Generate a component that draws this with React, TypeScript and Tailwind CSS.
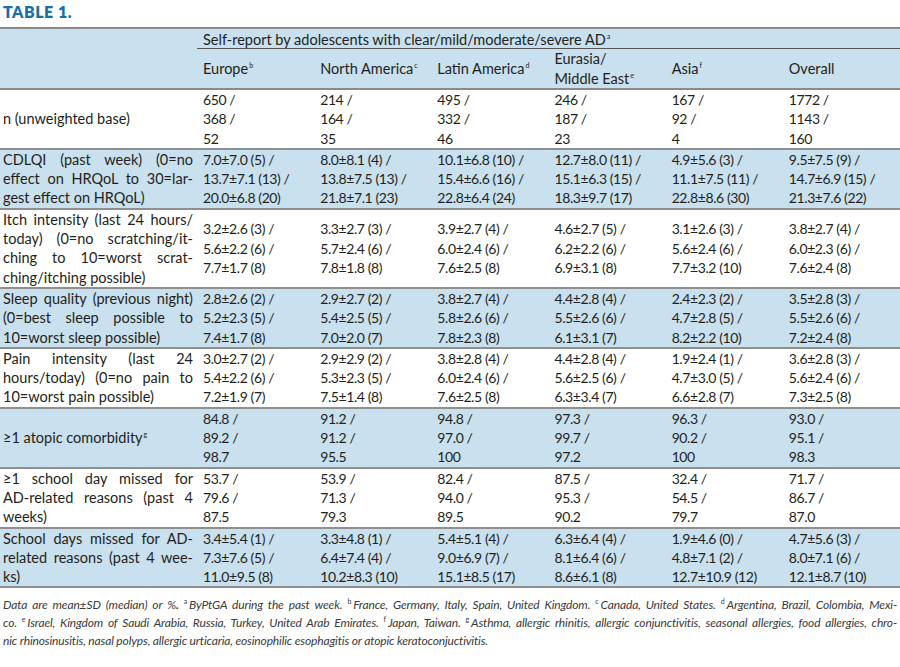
const cols = [
  { name: "Europe", sup: "b", w: "w-[105px]" },
  { name: "North America", sup: "c", w: "w-[122px]" },
  { name: "Latin America", sup: "d", w: "w-[107px]" },
  { name: "Eurasia/|Middle East", sup: "e", w: "w-[139px]" },
  { name: "Asia", sup: "f", w: "w-[111px]" },
  { name: "Overall", sup: "", w: "w-[119px]" },
];

type Row = { label: string[]; sup?: string; blue: boolean; vals: string[][] };

const rows: Row[] = [
  {
    label: ["n (unweighted base)"],
    blue: false,
    vals: [
      ["650 /", "368 /", "52"],
      ["214 /", "164 /", "35"],
      ["495 /", "332 /", "46"],
      ["246 /", "187 /", "23"],
      ["167 /", "92 /", "4"],
      ["1772 /", "1143 /", "160"],
    ],
  },
  {
    label: ["CDLQI (past week) (0=no", "effect on HRQoL to 30=lar-", "gest effect on HRQoL)"],
    blue: true,
    vals: [
      ["7.0±7.0 (5) /", "13.7±7.1 (13) /", "20.0±6.8 (20)"],
      ["8.0±8.1 (4) /", "13.8±7.5 (13) /", "21.8±7.1 (23)"],
      ["10.1±6.8 (10) /", "15.4±6.6 (16) /", "22.8±6.4 (24)"],
      ["12.7±8.0 (11) /", "15.1±6.3 (15) /", "18.3±9.7 (17)"],
      ["4.9±5.6 (3) /", "11.1±7.5 (11) /", "22.8±8.6 (30)"],
      ["9.5±7.5 (9) /", "14.7±6.9 (15) /", "21.3±7.6 (22)"],
    ],
  },
  {
    label: [
      "Itch intensity (last 24 hours/",
      "today) (0=no scratching/it-",
      "ching to 10=worst scrat-",
      "ching/itching possible)",
    ],
    blue: false,
    vals: [
      ["3.2±2.6 (3) /", "5.6±2.2 (6) /", "7.7±1.7 (8)"],
      ["3.3±2.7 (3) /", "5.7±2.4 (6) /", "7.8±1.8 (8)"],
      ["3.9±2.7 (4) /", "6.0±2.4 (6) /", "7.6±2.5 (8)"],
      ["4.6±2.7 (5) /", "6.2±2.2 (6) /", "6.9±3.1 (8)"],
      ["3.1±2.6 (3) /", "5.6±2.4 (6) /", "7.7±3.2 (10)"],
      ["3.8±2.7 (4) /", "6.0±2.3 (6) /", "7.6±2.4 (8)"],
    ],
  },
  {
    label: ["Sleep quality (previous night)", "(0=best sleep possible to", "10=worst sleep possible)"],
    blue: true,
    vals: [
      ["2.8±2.6 (2) /", "5.2±2.3 (5) /", "7.4±1.7 (8)"],
      ["2.9±2.7 (2) /", "5.4±2.5 (5) /", "7.0±2.0 (7)"],
      ["3.8±2.7 (4) /", "5.8±2.6 (6) /", "7.8±2.3 (8)"],
      ["4.4±2.8 (4) /", "5.5±2.6 (6) /", "6.1±3.1 (7)"],
      ["2.4±2.3 (2) /", "4.7±2.8 (5) /", "8.2±2.2 (10)"],
      ["3.5±2.8 (3) /", "5.5±2.6 (6) /", "7.2±2.4 (8)"],
    ],
  },
  {
    label: ["Pain intensity (last 24", "hours/today) (0=no pain to", "10=worst pain possible)"],
    blue: false,
    vals: [
      ["3.0±2.7 (2) /", "5.4±2.2 (6) /", "7.2±1.9 (7)"],
      ["2.9±2.9 (2) /", "5.3±2.3 (5) /", "7.5±1.4 (8)"],
      ["3.8±2.8 (4) /", "6.0±2.4 (6) /", "7.6±2.5 (8)"],
      ["4.4±2.8 (4) /", "5.6±2.5 (6) /", "6.3±3.4 (7)"],
      ["1.9±2.4 (1) /", "4.7±3.0 (5) /", "6.6±2.8 (7)"],
      ["3.6±2.8 (3) /", "5.6±2.4 (6) /", "7.3±2.5 (8)"],
    ],
  },
  {
    label: ["≥1 atopic comorbidity"],
    sup: "g",
    blue: true,
    vals: [
      ["84.8 /", "89.2 /", "98.7"],
      ["91.2 /", "91.2 /", "95.5"],
      ["94.8 /", "97.0 /", "100"],
      ["97.3 /", "99.7 /", "97.2"],
      ["96.3 /", "90.2 /", "100"],
      ["93.0 /", "95.1 /", "98.3"],
    ],
  },
  {
    label: ["≥1 school day missed for", "AD-related reasons (past 4", "weeks)"],
    blue: false,
    vals: [
      ["53.7 /", "79.6 /", "87.5"],
      ["53.9 /", "71.3 /", "79.3"],
      ["82.4 /", "94.0 /", "89.5"],
      ["87.5 /", "95.3 /", "90.2"],
      ["32.4 /", "54.5 /", "79.7"],
      ["71.7 /", "86.7 /", "87.0"],
    ],
  },
  {
    label: ["School days missed for AD-", "related reasons (past 4 wee-", "ks)"],
    blue: true,
    vals: [
      ["3.4±5.4 (1) /", "7.3±7.6 (5) /", "11.0±9.5 (8)"],
      ["3.3±4.8 (1) /", "6.4±7.4 (4) /", "10.2±8.3 (10)"],
      ["5.4±5.1 (4) /", "9.0±6.9 (7) /", "15.1±8.5 (17)"],
      ["6.3±6.4 (4) /", "8.1±6.4 (6) /", "8.6±6.1 (8)"],
      ["1.9±4.6 (0) /", "4.8±7.1 (2) /", "12.7±10.9 (12)"],
      ["4.7±5.6 (3) /", "8.0±7.1 (6) /", "12.1±8.7 (10)"],
    ],
  },
];

function Up({ c }: { c: string }) {
  return <sup className="text-[7px] top-[-6px] ml-[1px]">{c}</sup>;
}

// justified lines, last one left aligned
function Lines({ lines, sup }: { lines: string[]; sup?: string }) {
  return (
    <>
      {lines.map((l, i) =>
        i < lines.length - 1 ? (
          <div key={i} className="text-justify [text-align-last:justify]">
            {l}
          </div>
        ) : (
          <div key={i}>
            {l}
            {sup && <Up c={sup} />}
          </div>
        )
      )}
    </>
  );
}

function Sup({ c }: { c: string }) {
  return <sup className="text-[7px] top-[-5px] not-italic mr-[2px]">{c}</sup>;
}

export default function App() {
  return (
    <div className="w-[900px] h-[667px] bg-white font-['Lato',sans-serif] text-[#231f20] overflow-hidden">
      <div className="pl-[3px] pt-[3px] h-[27px] text-[16px] font-extrabold text-[#1c6fa5] tracking-[0.5px] leading-[18px]">
        TABLE 1.
      </div>
      <table className="table-fixed w-[900px] border-collapse text-[14.5px] leading-[19.3px]">
        <thead className="bg-[#c9e0ee]">
          <tr className="border-t-2 border-[#8a8a8a]">
            <th rowSpan={2} className="w-[197px]" />
            <th colSpan={6} className="p-0 font-normal text-left">
              <div className="pl-[6px] h-[20px] pt-[1px] border-b border-[#555]">
                Self-report by adolescents with clear/mild/moderate/severe AD
                <Up c="a" />
              </div>
            </th>
          </tr>
          <tr className="border-b-2 border-[#8a8a8a]">
            {cols.map((c) => (
              <th key={c.name} className={`${c.w} h-[40px] font-normal text-left align-middle pl-[6px] pr-0 py-0`}>
                {c.name.split("|").map((p, i, a) => (
                  <div key={i}>
                    {p}
                    {i === a.length - 1 && c.sup && <Up c={c.sup} />}
                  </div>
                ))}
              </th>
            ))}
          </tr>
        </thead>
        <tbody>
          {rows.map((r, ri) => (
            <tr key={ri} className={`${r.blue ? "bg-[#c9e0ee]" : "bg-white"} border-b-2 border-[#8f8f8f]`}>
              <td className="align-middle pl-[3px] pr-[4px] py-0">
                <Lines lines={r.label} sup={r.sup} />
              </td>
              {r.vals.map((v, ci) => (
                <td
                  key={ci}
                  className="align-middle pl-[6px] pr-0 py-0 whitespace-nowrap text-[14px] tracking-[-0.4px]"
                >
                  {v.map((t, ti) => (
                    <div key={ti}>{t}</div>
                  ))}
                </td>
              ))}
            </tr>
          ))}
        </tbody>
      </table>
      <div className="mt-[8px] px-[3px] text-[12px] tracking-[-0.15px] leading-[18px] italic text-[#3a3a3a]">
        <div className="text-justify [text-align-last:justify]">
          Data are mean±SD (median) or %<b>.</b> <Sup c="a" />ByPtGA during the past week. <Sup c="b" />France, Germany,
          Italy, Spain, United Kingdom. <Sup c="c" />Canada, United States. <Sup c="d" />Argentina, Brazil, Colombia, Mexi-
        </div>
        <div className="text-justify [text-align-last:justify]">
          co. <Sup c="e" />Israel, Kingdom of Saudi Arabia, Russia, Turkey, United Arab Emirates. <Sup c="f" />Japan,
          Taiwan. <Sup c="g" />Asthma, allergic rhinitis, allergic conjunctivitis, seasonal allergies, food allergies, chro-
        </div>
        <div>
          nic rhinosinusitis, nasal polyps, allergic urticaria, eosinophilic esophagitis or atopic keratoconjuctivitis.
        </div>
      </div>
    </div>
  );
}
